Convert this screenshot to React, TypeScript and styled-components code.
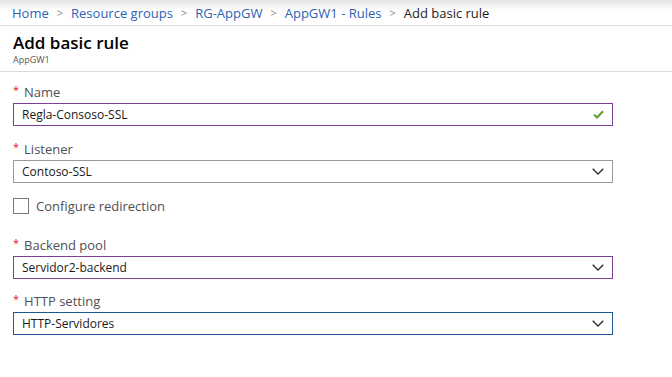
import React from "react";
import styled, { createGlobalStyle } from "styled-components";

const GlobalStyle = createGlobalStyle`
  body {
    margin: 0;
    background: #ffffff;
    font-family: "Open Sans", "Noto Sans", sans-serif;
  }
`;

const Page = styled.div`
  width: 672px;
  height: 377px;
  overflow: hidden;
  background: #ffffff;
`;

const Breadcrumbs = styled.nav`
  height: 26px;
  display: flex;
  align-items: center;
  gap: 8px;
  padding: 0 12px;
  box-sizing: border-box;
  border-bottom: 1px solid #dcdcdc;
  background: linear-gradient(#e4e4e4 0px, #fbfbfb 9px, #ffffff 14px);
  font-size: 13px;
`;

const Crumb = styled.a<{ $current?: boolean }>`
  color: ${(p) => (p.$current ? "#1e1e1e" : "#2d62b4")};
  text-decoration: none;
  white-space: nowrap;
`;

const Sep = styled.span`
  color: #8a8a8a;
  font-size: 11px;
`;

const Header = styled.header`
  padding: 6px 13px 0;
  height: 46px;
  box-sizing: border-box;
  border-bottom: 1px solid #dadada;
`;

const Title = styled.h1`
  margin: 0;
  font-size: 17px;
  font-weight: 600;
  line-height: 22px;
  color: #000000;
`;

const Subtitle = styled.div`
  font-size: 9px;
  color: #555555;
  line-height: 12px;
`;

const Form = styled.form`
  padding: 11px 0 0 13px;
  width: 600px;
  display: flex;
  flex-direction: column;
`;

const Field = styled.div<{ $gap: number }>`
  margin-top: ${(p) => p.$gap}px;
  display: flex;
  flex-direction: column;
`;

const Label = styled.label`
  display: flex;
  align-items: center;
  gap: 5px;
  font-size: 13px;
  color: #505050;
  line-height: 18px;
  margin-bottom: 2px;
`;

const Star = styled.span`
  color: #e3101e;
  font-size: 11px;
  position: relative;
  top: -2px;
`;

const Box = styled.div<{ $border: string }>`
  height: 23px;
  box-sizing: border-box;
  border: 1px solid ${(p) => p.$border};
  display: flex;
  align-items: center;
  justify-content: space-between;
  padding: 0 8px 0 8px;
  font-size: 12px;
  color: #1a1a1a;
  background: #ffffff;
`;

const CheckRow = styled.div`
  margin-top: 14px;
  display: flex;
  align-items: center;
  gap: 7px;
  font-size: 13px;
  color: #505050;
`;

const CheckBox = styled.span`
  width: 16px;
  height: 16px;
  box-sizing: border-box;
  border: 1px solid #7a7a7a;
  background: #ffffff;
`;

const Chevron = () => (
  <svg width="12" height="7" viewBox="0 0 12 7">
    <path d="M0.7 0.7 L6 6 L11.3 0.7" fill="none" stroke="#2b2b2b" strokeWidth="1.3" />
  </svg>
);

const Check = () => (
  <svg width="11" height="9" viewBox="0 0 11 9">
    <path d="M1 4.6 L4 7.5 L10 1.2" fill="none" stroke="#5aa22a" strokeWidth="2" />
  </svg>
);

const COLORS = {
  purple: "#7b3f93",
  gray: "#9a9a9a",
  blue: "#1d5a93",
};

export default function App() {
  return (
    <Page>
      <GlobalStyle />
      <Breadcrumbs>
        <Crumb href="#">Home</Crumb>
        <Sep>&gt;</Sep>
        <Crumb href="#">Resource groups</Crumb>
        <Sep>&gt;</Sep>
        <Crumb href="#">RG-AppGW</Crumb>
        <Sep>&gt;</Sep>
        <Crumb href="#">AppGW1 - Rules</Crumb>
        <Sep>&gt;</Sep>
        <Crumb $current>Add basic rule</Crumb>
      </Breadcrumbs>
      <Header>
        <Title>Add basic rule</Title>
        <Subtitle>AppGW1</Subtitle>
      </Header>
      <Form>
        <Field $gap={0}>
          <Label><Star>*</Star>Name</Label>
          <Box $border={COLORS.purple}>
            Regla-Consoso-SSL
            <Check />
          </Box>
        </Field>
        <Field $gap={14}>
          <Label><Star>*</Star>Listener</Label>
          <Box $border={COLORS.gray}>
            Contoso-SSL
            <Chevron />
          </Box>
        </Field>
        <CheckRow>
          <CheckBox />
          Configure redirection
        </CheckRow>
        <Field $gap={21}>
          <Label><Star>*</Star>Backend pool</Label>
          <Box $border={COLORS.purple}>
            Servidor2-backend
            <Chevron />
          </Box>
        </Field>
        <Field $gap={13}>
          <Label><Star>*</Star>HTTP setting</Label>
          <Box $border={COLORS.blue}>
            HTTP-Servidores
            <Chevron />
          </Box>
        </Field>
      </Form>
    </Page>
  );
}
